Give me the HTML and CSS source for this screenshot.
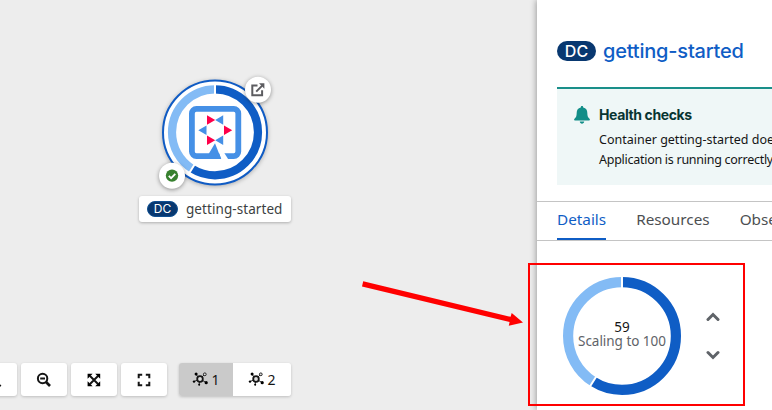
FILE: index.html
```
<!DOCTYPE html>
<html lang="en">
<head>
<meta charset="utf-8">
<title>Topology</title>
<link rel="stylesheet" href="styles.css">
</head>
<body>
<div class="app">
  <main class="topology">
    <svg class="node" viewBox="130 70 170 160" width="170" height="160">
      <circle class="node-bg" cx="215" cy="132.5" r="52"/>
      <circle class="ring dark" cx="215" cy="132.3" r="43" pathLength="100" stroke-dasharray="59 41" transform="rotate(-90 215 132.3)"/>
      <circle class="ring light" cx="215" cy="132.3" r="43" pathLength="100" stroke-dasharray="0 59 41 0" transform="rotate(-90 215 132.3)"/>
      <path class="gap" d="M215 94V84M194.6 164.5l-5.5 8.8"/>
      <rect class="logo-frame" x="191.9" y="108.9" width="46.4" height="47.2" rx="4.5"/>
      <path class="white" d="M215 141l6.5 19h7.2l-5-8z"/>
      <path class="logo-blue" d="M223.2 115.3v9.4l-8-4.7zM198.3 130.3l8.2-4.7v9.4zM223.2 135.5v9.4l-8-4.7zM215 143.3l6.2 15.7h-14l2-6z"/>
      <path class="logo-red" d="M207 115.3v9.4l8.2-4.7zM224 125.6v9.4l8.2-4.7zM207 135.5v9.4l8.2-4.7z"/>
      <circle class="badge" cx="258" cy="89.7" r="13"/>
      <path class="open-icon" d="M257.5 85.5h-5.2v9.8h9.8v-5M256.2 91.6l6-6"/>
      <path class="open-head" d="M259 83.3h5.4v5.4z"/>
      <circle class="badge" cx="172" cy="175.7" r="13"/>
      <circle class="ok" cx="172" cy="175.6" r="6.2"/>
      <path class="check" d="M168.8 175.8l2.3 2.3 4.2-4.3"/>
    </svg>
    <div class="node-label"><span class="kind small">DC</span><span class="node-name">getting-started</span></div>
    <div class="toolbar">
      <button class="tool"><svg width="16" height="16" viewBox="0 0 16 16"><circle class="lens" cx="6.5" cy="6.5" r="4.8"/><path class="handle" d="M10 10l4.5 4.5"/></svg></button>
      <button class="tool"><svg width="16" height="16" viewBox="0 0 16 16"><circle class="lens" cx="6.6" cy="6.5" r="4.7"/><path class="lens" d="M4.2 6.5H9"/><path class="handle" d="M10 10l4 4"/></svg></button>
      <button class="tool"><svg width="16" height="16" viewBox="0 0 16 16"><path class="lens" d="M4 4l8 8M12 4l-8 8"/><path d="M1.6 1.8h5L1.6 6.8zM14.2 1.8v5l-5-5zM1.6 14.2v-5l5 5zM14.2 14.2h-5l5-5z"/></svg></button>
      <button class="tool"><svg width="16" height="16" viewBox="0 0 16 16"><path class="lens" d="M6.2 2.8H2.7v3.5M9.8 2.8h3.5v3.5M6.2 13.2H2.7V9.7M9.8 13.2h3.5V9.7"/></svg></button>
      <div class="layouts">
        <button class="layout active"><svg width="16" height="16" viewBox="0 0 16 16"><use href="#graph"/></svg>1</button>
        <button class="layout"><svg width="16" height="16" viewBox="0 0 16 16"><use href="#graph"/></svg>2</button>
      </div>
    </div>
  </main>
  <aside class="panel">
    <header class="title"><span class="kind">DC</span><h1>getting-started</h1></header>
    <section class="alert">
      <svg class="bell" width="16" height="18" viewBox="0 0 16 18"><path d="M8 0c.8 0 1.2.5 1.2 1.4C12 2 13.3 4 13.3 6.7c0 3.7.8 4.7 2.2 6 .8.8.3 1.9-.7 1.9H1.2c-1 0-1.5-1.1-.7-1.9 1.4-1.3 2.2-2.3 2.2-6C2.7 4 4 2 6.8 1.4 6.8.5 7.2 0 8 0zM5.8 15.6h4.4c0 2.8-4.4 2.8-4.4 0z"/></svg>
      <div class="alert-text">
        <h2>Health checks</h2>
        <p class="line-one">Container getting-started does not have health checks</p>
        <p class="line-two">Application is running correctly.</p>
      </div>
    </section>
    <nav class="tabs"><a class="tab current">Details</a><a class="tab resources">Resources</a><a class="tab observe">Observe</a></nav>
    <div class="scaling">
      <svg class="donut" width="120" height="120" viewBox="0 0 120 120">
        <circle class="ring dark" cx="60" cy="60" r="53.9" pathLength="100" stroke-dasharray="59 41" transform="rotate(-90 60 60)"/>
        <circle class="ring light" cx="60" cy="60" r="53.9" pathLength="100" stroke-dasharray="0 59 41 0" transform="rotate(-90 60 60)"/>
        <path class="gap" d="M60 13V0M34.3 100.5l-7 11"/>
        <text class="count" x="60" y="56" text-anchor="middle">59</text>
        <text class="target" x="60" y="70" text-anchor="middle" textLength="88">Scaling to 100</text>
      </svg>
      <div class="steppers">
        <svg width="14" height="10" viewBox="0 0 14 10"><path class="chevron" d="M2 7.5l5-5 5 5"/></svg>
        <svg width="14" height="10" viewBox="0 0 14 10"><path class="chevron" d="M2 2.5l5 5 5-5"/></svg>
      </div>
    </div>
  </aside>
</div>
<svg class="annotation" width="772" height="410" viewBox="0 0 772 410">
  <defs><g id="graph"><path class="spoke" d="M8 8L3.4 2.8M8 8l5-5M8 8l-6 2.5M8 8l6 3.5M8 8l-1 6"/><circle class="hub" cx="8" cy="8" r="2.8"/><circle cx="4.1" cy="3" r="1.5"/><circle class="satellite" cx="12.8" cy="3.3" r="1.4"/><circle cx="2" cy="10.6" r="1.2"/><circle cx="14.2" cy="11.7" r="1.6"/><circle cx="7.2" cy="13.8" r="1"/></g></defs>
  <rect class="callout" x="529" y="264" width="215" height="141"/>
  <path class="arrow" d="M363.2 281.2L510.6 316.8 511.7 313 523 322.5 508.8 325.8 509.6 322 362 286.4z"/>
</svg>
</body>
</html>
```
FILE: styles.css
```
* { box-sizing: border-box; }
body { margin: 0; overflow: hidden; font-family: "Noto Sans", sans-serif; color: #151515; }
h1, h2, p { margin: 0; }
.app { display: flex; width: 772px; height: 410px; overflow: hidden; }
.topology { position: relative; flex: 0 0 537px; background: #ededed; }
.node { position: absolute; left: 130px; top: 70px; overflow: visible; }
.node-bg { fill: #fff; stroke: #0f5bc4; stroke-width: 2; filter: drop-shadow(0 1px 2px #0004); }
.ring { fill: none; stroke-width: 8.2; }
.dark { stroke: #0f5dc5; }
.light { stroke: #83bbf5; }
.gap { fill: none; stroke: #fff; stroke-width: 2; }
.logo-frame { fill: none; stroke: #4590e6; stroke-width: 5.8; }
.logo-blue { fill: #4590e6; }
.logo-red { fill: #ff004a; }
.white { fill: #fff; }
.badge { fill: #fff; filter: drop-shadow(0 1px 2px #0006); }
.open-icon { fill: none; stroke: #5c5c60; stroke-width: 2; }
.open-head { fill: #5c5c60; }
.ok { fill: #38812f; }
.check { fill: none; stroke: #fff; stroke-width: 1.8; }
.node-label { position: absolute; left: 139px; top: 196px; width: 152px; height: 26px; padding-left: 8px; display: flex; align-items: center; background: #fff; border-radius: 3px; box-shadow: 0 1px 3px #0004; font-size: 13.5px; color: #3c3f42; }
.kind { display: flex; align-items: center; justify-content: center; width: 39px; height: 20px; border-radius: 10px; background: #083870; color: #fff; font: 500 16px/20px Inter, sans-serif; }
.kind.small { width: 31px; height: 16px; font-size: 12px; font-weight: 400; border: 1px solid #0f5092; }
.node-name { margin-left: 8px; white-space: nowrap; letter-spacing: .07px; }
.toolbar { position: absolute; left: -29px; top: 363px; display: flex; }
button { border: 0; padding: 0; background: #fff; font: 14px "Noto Sans", sans-serif; color: #151515; display: flex; align-items: center; justify-content: center; }
.tool { width: 46px; height: 33px; margin-right: 4px; border-radius: 3px; box-shadow: 0 1px 3px #0003; }
.lens { fill: none; stroke: #151515; stroke-width: 2; }
.handle { fill: none; stroke: #151515; stroke-width: 2.6; }
.layouts { display: flex; width: 112px; height: 33px; margin-left: 8px; overflow: hidden; border-radius: 3px; box-shadow: 0 1px 3px #0003; }
.layout { width: 54px; gap: 3px; padding-bottom: 1px; }
.layout + .layout { width: 58px; }
.active { background: #cacaca; }
.spoke { fill: none; stroke: #151515; stroke-width: .9; }
.hub { fill: #ddd; stroke: #151515; stroke-width: 1.8; }
.satellite { fill: #ddd; stroke: #151515; stroke-width: .9; }
.panel { position: relative; flex: 0 0 235px; background: #fff; box-shadow: -1px 0 6px #0005; }
.title { display: flex; align-items: center; height: 87px; padding: 15px 0 0 20px; }
.title h1 { margin-left: 7px; font: 500 20px/30px Inter, sans-serif; letter-spacing: -.2px; color: #0f5dc5; white-space: nowrap; }
.alert { display: flex; width: 280px; height: 98px; margin-left: 20px; padding: 17px 0 0 17px; border-top: 2px solid #1a8f8a; background: #eff7f7; }
.bell { fill: #128e88; flex: none; }
.alert-text { margin-left: 9px; white-space: nowrap; }
.alert h2 { margin: -1px 0 5px; font: 700 14px/20px Inter, sans-serif; letter-spacing: -.38px; color: #083532; }
.alert p { font-size: 12.5px; line-height: 20px; }
.alert .line-two { letter-spacing: -.27px; }
.tabs { display: flex; gap: 30px; height: 40px; margin-top: 16px; padding-left: 20px; border-top: 1px solid #c4c4c4; border-bottom: 1px solid #c4c4c4; }
.tab { height: 38px; font-size: 15.3px; line-height: 35px; color: #4d4f52; white-space: nowrap; }
.current { color: #0f5dc5; border-bottom: 2px solid #0f5dc5; }
.scaling { display: flex; padding: 35px 0 0 25px; }
.donut .ring { stroke-width: 10.2; }
.donut .count, .donut .target { font-size: 13.5px; fill: #151515; }
.donut .target { fill: #606368; }
.steppers { display: flex; flex-direction: column; gap: 28px; margin: 36px 0 0 24px; }
.chevron { fill: none; stroke: #5f6368; stroke-width: 3; stroke-linecap: round; }
.annotation { position: absolute; left: 0; top: 0; pointer-events: none; }
.callout { fill: none; stroke: #f00; stroke-width: 2; }
.arrow { fill: #f00; }
```
